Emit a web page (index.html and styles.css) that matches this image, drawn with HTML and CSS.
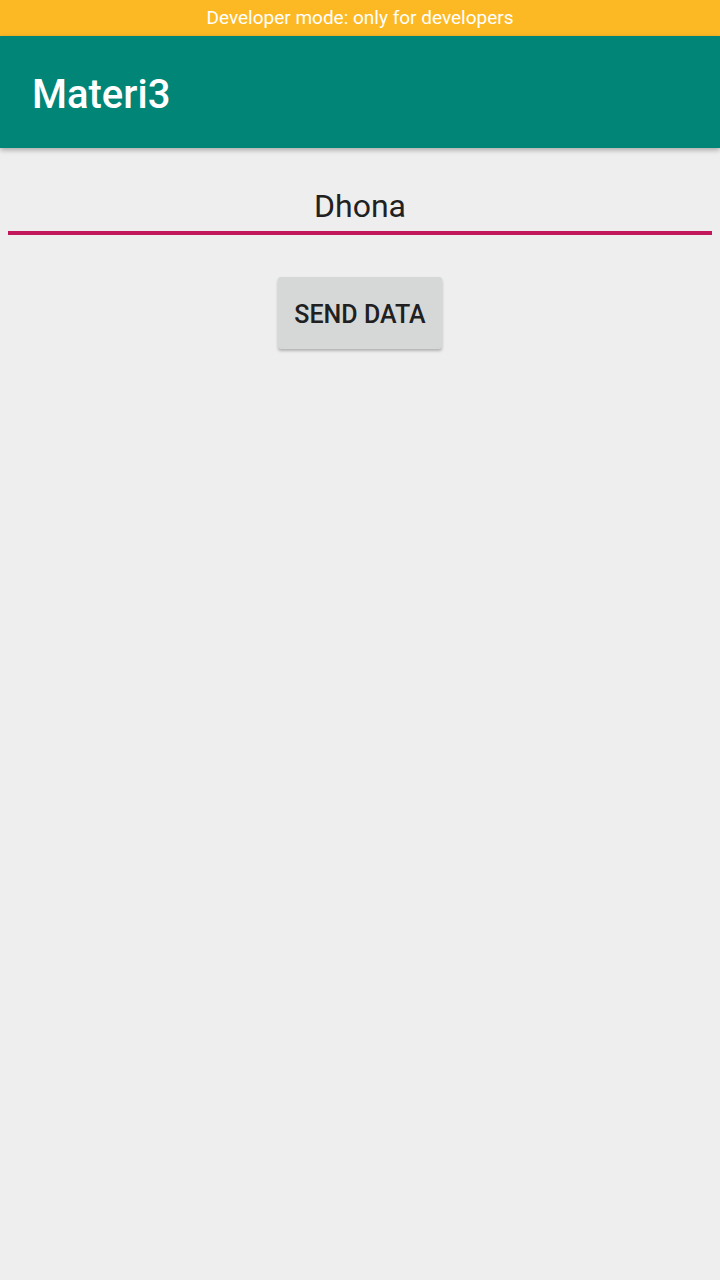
FILE: index.html
```html
<!DOCTYPE html>
<html>
<head>
<meta charset="utf-8">
<link rel="stylesheet" href="styles.css">
</head>
<body>
<div class="status">Developer mode: only for developers</div>
<header class="toolbar"><h1 class="title">Materi3</h1></header>
<main class="content">
  <div class="field"><span class="field-text">Dhona</span></div>
  <div class="actions"><button class="btn">SEND DATA</button></div>
</main>
</body>
</html>
```
FILE: styles.css
```css
html, body { margin: 0; padding: 0; }
body {
  width: 720px; height: 1280px; background: #eeeeee;
  font-family: Roboto, "Noto Sans", sans-serif; overflow: hidden;
}
.status {
  height: 36px; background: #fdb924; color: #ffffff;
  font-size: 19px; line-height: 36px; text-align: center;
}
.toolbar {
  height: 112px; background: #008577; display: flex; align-items: center;
  padding-left: 32px; box-shadow: 0 2px 5px rgba(0,0,0,0.3); position: relative;
}
.title { margin: 0; color: #ffffff; font-size: 40px; font-weight: 500; padding-top: 4px; }
.content { padding: 0 8px; }
.field {
  margin-top: 37px; height: 46px; border-bottom: 4px solid #c2185b;
  display: flex; justify-content: center; align-items: flex-end;
}
.field-text { font-size: 32px; color: #212121; line-height: 40px; padding-bottom: 5px; }
.actions { display: flex; justify-content: center; padding-top: 42px; }
.btn {
  width: 164px; height: 72px; background: #d6d7d7; border: none; border-radius: 3px;
  font-family: Roboto, sans-serif; font-weight: 500; font-size: 25px; color: #202020;
  box-shadow: 0 2px 3px rgba(0,0,0,0.25); padding: 2px 0 0;
}
```
